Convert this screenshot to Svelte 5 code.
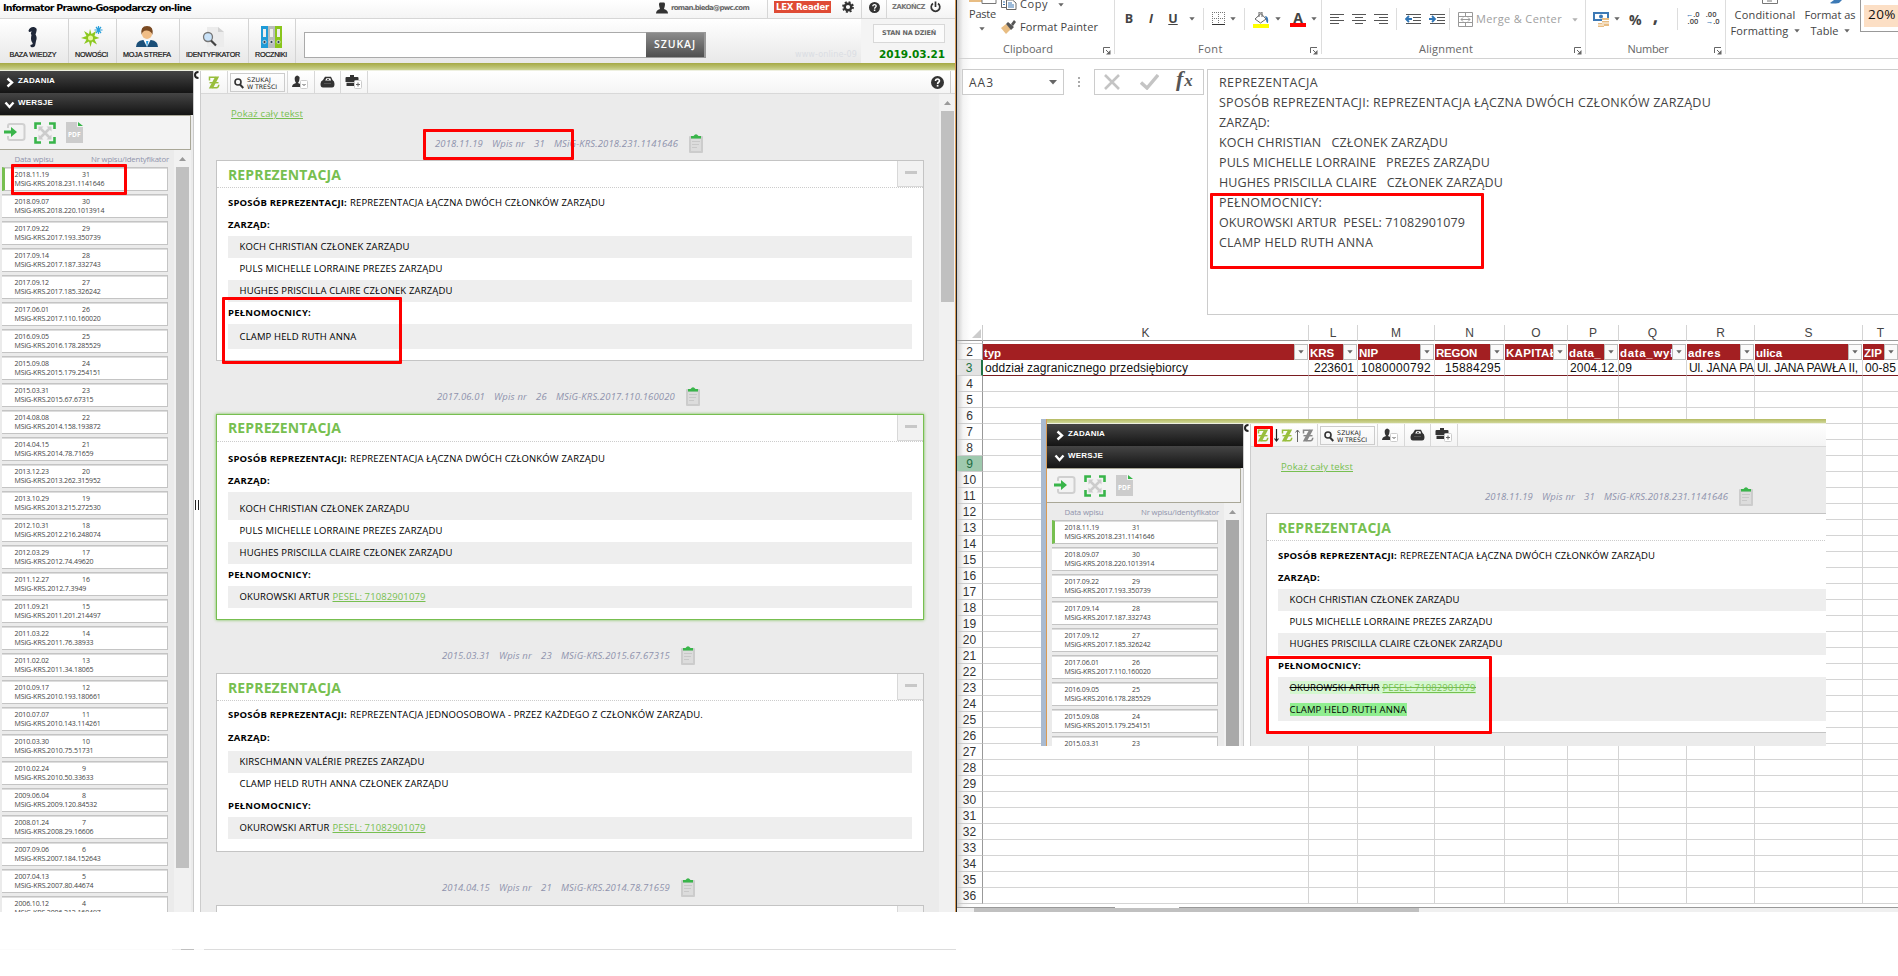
<script>
  // Spreads a label over a known width by adjusting its tracking.
  function fit(node, width) {
    const natural = node.getBoundingClientRect().width;
    const n = node.textContent.length;
    if (width && n) node.style.letterSpacing = (width - natural) / n + 'px';
  }

  const entries = [
    ['2018.11.19', 31, '2018.231.1141646'], ['2018.09.07', 30, '2018.220.1013914'],
    ['2017.09.22', 29, '2017.193.350739'], ['2017.09.14', 28, '2017.187.332743'],
    ['2017.09.12', 27, '2017.185.326242'], ['2017.06.01', 26, '2017.110.160020'],
    ['2016.09.05', 25, '2016.178.285529'], ['2015.09.08', 24, '2015.179.254151'],
    ['2015.03.31', 23, '2015.67.67315'], ['2014.08.08', 22, '2014.158.193872'],
    ['2014.04.15', 21, '2014.78.71659'], ['2013.12.23', 20, '2013.262.315952'],
    ['2013.10.29', 19, '2013.215.272530'], ['2012.10.31', 18, '2012.216.248074'],
    ['2012.03.29', 17, '2012.74.49620'], ['2011.12.27', 16, '2012.7.3949'],
    ['2011.09.21', 15, '2011.201.214497'], ['2011.03.22', 14, '2011.76.38933'],
    ['2011.02.02', 13, '2011.34.18065'], ['2010.09.17', 12, '2010.193.180661'],
    ['2010.07.07', 11, '2010.143.114261'], ['2010.03.30', 10, '2010.75.51731'],
    ['2010.02.24', 9, '2010.50.33633'], ['2009.06.04', 8, '2009.120.84532'],
    ['2008.01.24', 7, '2008.29.16606'], ['2007.09.06', 6, '2007.184.152643'],
    ['2007.04.13', 5, '2007.80.44674'], ['2006.10.12', 4, '2006.212.160497']
  ];

  const joint = ['REPREZENTACJA ŁĄCZNA DWÓCH CZŁONKÓW ZARZĄDU', 255];
  const board = [
    ['KOCH CHRISTIAN CZŁONEK ZARZĄDU', 170],
    ['PULS MICHELLE LORRAINE PREZES ZARZĄDU', 203],
    ['HUGHES PRISCILLA CLAIRE CZŁONEK ZARZĄDU', 213]
  ];
  const clamp = { name: 'CLAMP HELD RUTH ANNA', w: 117 };
  const okur = { name: 'OKUROWSKI ARTUR', w: 90, pesel: 'PESEL: 71082901079' };

  const records = [
    { date: '2018.11.19', nr: 31, id: 'MSiG-KRS.2018.231.1141646', way: joint, people: board, proxies: [clamp], kind: 'first' },
    { date: '2017.06.01', nr: 26, id: 'MSiG-KRS.2017.110.160020', way: joint, people: board, proxies: [okur], kind: 'active' },
    { date: '2015.03.31', nr: 23, id: 'MSiG-KRS.2015.67.67315',
      way: ['REPREZENTACJA JEDNOOSOBOWA - PRZEZ KAŻDEGO Z CZŁONKÓW ZARZĄDU.', 353],
      people: [['KIRSCHMANN VALÉRIE PREZES ZARZĄDU', 185], ['CLAMP HELD RUTH ANNA CZŁONEK ZARZĄDU', 209]], proxies: [okur], kind: 'third' },
    { date: '2014.04.15', nr: 21, id: 'MSiG-KRS.2014.78.71659', kind: 'fourth' }
  ];
  const compared = [{ ...records[0], proxies: [{ ...okur, state: 'removed' }, { ...clamp, state: 'added' }], kind: 'diff' }];

  const columns = [['K', 326], ['L', 49], ['M', 77], ['N', 70], ['O', 63], ['P', 51], ['Q', 68], ['R', 68], ['S', 108], ['T', 36]];
  const heads = [['typ', 17], ['KRS', 24], ['NIP', 19], ['REGON', 41], ['KAPITAŁ', 51], ['data_', 32], ['data_wył', 54], ['adres', 33], ['ulica', 26], ['ZIP', 18]];
  const values = [['oddział zagranicznego przedsiębiorcy', 203], ['223601', 40, 1], ['1080000792', 70, 1], ['15884295', 56, 1], null, ['2004.12.09', 62], null, ['Ul. JANA PA', 65], ['Ul. JANA PAWŁA II,', 101], ['00-85', 31]];
  const blankRows = Array.from({ length: 33 }, (_, i) => i + 4);

  const formula = [
    ['REPREZENTACJA', 99], ['SPOSÓB REPREZENTACJI: REPREZENTACJA ŁĄCZNA DWÓCH CZŁONKÓW ZARZĄDU', 492],
    ['ZARZĄD:', 51], ['KOCH CHRISTIAN   CZŁONEK ZARZĄDU', 229], ['PULS MICHELLE LORRAINE   PREZES ZARZĄDU', 271],
    ['HUGHES PRISCILLA CLAIRE   CZŁONEK ZARZĄDU', 284], ['PEŁNOMOCNICY:', 103],
    ['OKUROWSKI ARTUR  PESEL: 71082901079', 246], ['CLAMP HELD RUTH ANNA', 154]
  ];
</script>

{#snippet tri()}<svg class="tri" width="6" height="4" viewBox="0 0 6 4"><path d="M.3.3h5.400L3 3.600z" fill="#666" /></svg>{/snippet}
{#snippet help(s)}
  <svg width={s} height={s} viewBox="0 0 12 12"><circle cx="6" cy="6" r="6" fill="#333" /><path d="M4.200 4.600c0-2.500 3.800-2.300 3.600 0-.1 1.200-1.700 1.200-1.700 2.700" fill="none" stroke="#fff" stroke-width="1.500" /><rect x="5.300" y="8.200" width="1.600" height="1.600" fill="#fff" /></svg>
{/snippet}
{#snippet zed(color)}
  <svg width="12" height="13" viewBox="0 0 12 13"><path d="M1.500 4.500V1.200h6M4.500 11.800h4q2 0 2.300-3" fill="none" stroke={color} stroke-width="1.500" /><path d="M7.300.6h3.900L4.800 12.500H.8z" fill={color} /><path d="M1.500 6.700h9" stroke={color} stroke-width="1.400" /></svg>
{/snippet}
{#snippet launcher()}
  <svg class="launch" width="8" height="8" viewBox="0 0 8 8"><path d="M.5 6V.5H7M3 3l3 3" fill="none" stroke="#666" /><path d="M7.500 3v4.500H3z" fill="#666" /></svg>
{/snippet}

{#snippet sidebar()}
  <aside class="side">
    <div class="acc"><svg width="8" height="11" viewBox="0 0 8 11"><path d="m1.500 1.500 4.500 4-4.500 4" fill="none" stroke="#fff" stroke-width="2.400" /></svg><span use:fit={37}>ZADANIA</span></div>
    <div class="acc open"><svg width="11" height="8" viewBox="0 0 11 8"><path d="m1.500 1.500 4 4.500 4-4.500" fill="none" stroke="#fff" stroke-width="2.400" /></svg><span use:fit={35}>WERSJE</span></div>
    <div class="tools">
      <svg width="22" height="20" viewBox="0 0 22 20"><path d="M4 6V4q0-2 2-2h12q2.500 0 2.500 2v12q0 2-2.500 2H6q-2 0-2-2v-2" fill="none" stroke="#d0d0d0" stroke-width="2" /><path d="M0 8.500h7V5l6 5-6 5v-3.500H0z" fill="#39b54a" /></svg>
      <svg width="22" height="22" viewBox="0 0 22 22"><path d="M1.500 7V1.500H7M15 1.500h5.500V7M20.500 15v5.500H15M7 20.500H1.500V15" fill="none" stroke="#39b54a" stroke-width="2.600" /><path d="M6 6l10 10M16 6 6 16" stroke="#ccc" stroke-width="2.500" /><path d="M4.500 4.500h5l-5 5zM17.500 4.500h-5l5 5zM4.500 17.500h5l-5-5zM17.500 17.500h-5l5-5z" fill="#ccc" /></svg>
      <span class="pdf"><svg width="17" height="21" viewBox="0 0 17 21"><path d="M0 0h11v5h6v16H0z" fill="#ccc" /><path d="M12 0v4h5z" fill="#39b54a" /></svg><b>PDF</b></span>
    </div>
    <div class="listwrap">
      <div class="list">
        <div class="listhead"><span use:fit={39}>Data wpisu</span><span use:fit={78}>Nr wpisu/Identyfikator</span></div>
        {#each entries as [date, nr, id], i}
          <div class="entry" class:current={i === 0}>
            <div><span use:fit={34.5}>{date}</span><span class="nr">{nr}</span></div>
            <div><span use:fit={(id.length + 9) * 3.59}>MSiG-KRS.{id}</span></div>
          </div>
        {/each}
      </div>
      <div class="sbar"><svg width="7" height="4" viewBox="0 0 7 4"><path d="M0 4 3.500 0 7 4z" fill="#999" /></svg><i></i></div>
    </div>
  </aside>
  <div class="splitter"><svg width="5" height="8" viewBox="0 0 5 8"><path d="M4.500 1Q1 1 1 4t3.500 3" fill="none" stroke="#222" stroke-width="2" /></svg><i></i></div>
{/snippet}

{#snippet toolbar(diff)}
  <div class="toolbar">
    <div class="tc z" class:wide={diff}>
      {@render zed('#98be3c')}
      {#if diff}
        <svg class="first-arrow" width="5" height="13" viewBox="0 0 5 13"><path d="M2.500 0v12M.5 9.500l2 2.500 2-2.500" fill="none" stroke="#222" stroke-width="1.200" /></svg>{@render zed('#98be3c')}
        <svg width="5" height="13" viewBox="0 0 5 13"><path d="M2.500 13V1M.5 3.500l2-2.500 2 2.500" fill="none" stroke="#666" /></svg>{@render zed('#888')}
      {/if}
    </div>
    <div class="tc find"><div class="findbtn"><svg width="10" height="11" viewBox="0 0 10 11"><circle cx="4" cy="4" r="3" fill="none" stroke="#333" stroke-width="1.600" /><path d="m6 6.500 3.300 3.500" stroke="#333" stroke-width="2" /></svg><div><span use:fit={24}>SZUKAJ</span><br /><span use:fit={30}>W TREŚCI</span></div></div></div>
    <div class="tc"><svg width="17" height="14" viewBox="0 0 17 14"><path d="M0 12q0-3 4-4Q2 5 3 2q2-3 4.500 0Q8 5.500 6 8q4 1 4 4z" fill="#333" /><rect x="8.500" y="5.500" width="7" height="8" rx="1" fill="#fff" stroke="#ccc" /><path d="m10.500 9 1.500 1.500L13.500 9" fill="none" stroke="#555" /></svg></div>
    <div class="tc"><svg width="15" height="12" viewBox="0 0 15 12"><path d="M3 4 5 .8h6L12.500 4q2 1 2 4 0 3.500-2.500 3.500H3Q.5 11.500.5 8q0-3 2.500-4z" fill="#333" /><path d="M5.200 4.500 6.300 2.200h4l.8 2.300z" fill="#fff" /><path d="M7 3.500h2M4 7.500h7" stroke="#555" /></svg></div>
    <div class="tc"><svg width="18" height="14" viewBox="0 0 18 14"><path d="M5 2V0h4v2h3.500q1 0 1 1v4H.5V3q0-1 1-1zM1.500 7.800H9V11H1.500z" fill="#333" /><rect x="9.500" y="5.500" width="7" height="8" rx="1" fill="#fff" stroke="#ccc" /><path d="M13 7.500v4M11 9.500h4" stroke="#666" /></svg></div>
    <div class="grow"></div>
    {#if !diff}<div class="endhelp">{@render help(13)}</div>{/if}
  </div>
{/snippet}

{#snippet record(r)}
  <div class="meta {r.kind}"><span use:fit={48}>{r.date}</span><span use:fit={33}>Wpis nr</span><span use:fit={11}>{r.nr}</span><span use:fit={r.id.length * 4.96}>{r.id}</span>
    <svg width="14" height="19" viewBox="0 0 14 19"><rect y="2" width="14" height="17" rx="1" fill="#ccc" /><rect x="2" y="5" width="10" height="12" fill="#dcdcdc" /><path d="M3 7.500h8M3 10.500h7M3 13.500h5" stroke="#c8c8c8" /><path d="M2 4.500V2h2.500Q7-1.500 9.500 2H12v2.500z" fill="#39b54a" /></svg>
  </div>
  <section class="card {r.kind}">
    <header>{#if r.way}<h2 use:fit={113}>REPREZENTACJA</h2>{:else}<span></span>{/if}<button><i></i></button></header>
    {#if r.way}
      <div class="body">
        <p><b use:fit={119}>SPOSÓB REPREZENTACJI:</b><span class="way" use:fit={r.way[1]}>{r.way[0]}</span></p>
        <p><b use:fit={42}>ZARZĄD:</b></p>
        <ul>{#each r.people as [name, w]}<li><span use:fit={w}>{name}</span></li>{/each}</ul>
        <p><b use:fit={83}>PEŁNOMOCNICY:</b></p>
        <ul class="proxies">{#each r.proxies as p}<li><span class="name {p.state ?? ''}"><span use:fit={p.w}>{p.name}</span>{#if p.pesel}<span class="gap"> </span><u use:fit={93}>{p.pesel}</u>{/if}</span></li>{/each}</ul>
      </div>
    {/if}
  </section>
{/snippet}

<div class="screen">
  <div class="app">
    <header class="top">
      <div class="line1">
        <div class="title"><b use:fit={188}>Informator Prawno-Gospodarczy on-line</b></div>
        <div class="user"><svg width="12" height="12" viewBox="0 0 12 12"><path d="M0 11.500Q0 8 4 7 2 1 4 .5h4Q10 1 8 7q4 1 4 4.500z" fill="#333" /></svg><b use:fit={78}>roman.bieda@pwc.com</b></div>
        <div class="lex"><b><span use:fit={53}>LEX Reader</span></b><svg width="12" height="12" viewBox="0 0 12 12"><circle cx="6" cy="6" r="3.300" fill="none" stroke="#333" stroke-width="2.400" /><circle cx="6" cy="6" r="5" fill="none" stroke="#333" stroke-width="1.800" stroke-dasharray="2 1.930" /></svg></div>
        <div class="hq">{@render help(11)}</div>
        <div class="exit"><b use:fit={33}>ZAKOŃCZ</b><svg width="11" height="12" viewBox="0 0 11 12"><path d="M3 2.500a4.300 4.300 0 1 0 5 0M5.500.5v5.500" fill="none" stroke="#333" stroke-width="1.700" /></svg></div>
      </div>
      <div class="line2">
        <div class="nav" style:width="69px"><svg width="14" height="22" viewBox="0 0 14 22"><path d="M2.500 4.500Q4 .5 8 1q3.500 1 2.500 4-.5 2-1 3.500 2 3 .5 6.500-.5 3-1 5-1.500 2-4 1-1.500-1.500 0-2.500 1.500.5 1.800-1-1.800-2-1.800-4.500 0-2.500.5-4Q4 7 6 5.500L3 6z" fill="#1f2738" /></svg><span use:fit={47}>BAZA WIEDZY</span></div>
        <div class="nav" style:width="48px"><svg width="22" height="22" viewBox="0 0 22 22"><path d="m9 3 1.500 5L15 5l-1.500 5 5 2-5 1.500 2.500 5-5-3L9.500 21 8 15.500 3 18l2.500-4.500L0 12l5.500-2L3 5l5 3z" fill="#8cc820" /><circle cx="9.500" cy="12" r="2.500" fill="#e9f7a0" /><path d="M17.500 0v8M13.500 4h8M15 1l5 6M20 1l-5 6" stroke="#2aa0dc" stroke-width="1.200" /></svg><span use:fit={33}>NOWOŚCI</span></div>
        <div class="nav" style:width="63px"><svg width="22" height="22" viewBox="0 0 22 22"><path d="M0 21q0-6 7-7h8q7 1 7 7z" fill="#1b4f78" /><path d="m7.500 14 3.500 7 3.500-7z" fill="#fff" /><path d="m10 15 1 6 1.500-6z" fill="#2a9de0" /><circle cx="11" cy="8" r="5" fill="#f0bd86" /><path d="M5.500 9Q4 0 11 0t5.500 9q-1-4-5.500-4.500T5.500 9z" fill="#7a4a22" /></svg><span use:fit={48}>MOJA STREFA</span></div>
        <div class="nav" style:width="69px"><svg width="22" height="22" viewBox="0 0 22 22"><path d="M5 1h11l6 5v15H5z" fill="#ececec" /><path d="m16 1 6 5h-6z" fill="#d2d2d2" /><circle cx="6" cy="11" r="4.500" fill="#c9e2f8" stroke="#777" stroke-width="1.300" /><path d="m9 14.500 5 5" stroke="#444" stroke-width="2.200" /></svg><span use:fit={54}>IDENTYFIKATOR</span></div>
        <div class="nav" style:width="47px"><svg width="21" height="22" viewBox="0 0 21 22"><rect width="7" height="22" fill="#1f9bd7" /><rect x="7" width="7" height="22" fill="#b9bcbd" /><rect x="14" width="7" height="22" fill="#89c51c" /><path d="M2 3h3v8H2zM9 3h3v8H9zM16 3h3v8h-3z" fill="#eee" /><g fill="#345" stroke="#fff" stroke-width=".7"><circle cx="3.500" cy="16" r="1.600" /><circle cx="10.500" cy="16" r="1.600" /><circle cx="17.500" cy="16" r="1.600" /></g></svg><span use:fit={32}>ROCZNIKI</span></div>
        <div class="search"></div><div class="go"><span use:fit={42}>SZUKAJ</span></div>
        <div class="host"><span use:fit={62}>www-online-09</span></div>
        <div class="state"><div><b use:fit={54}>STAN NA DZIEŃ</b></div><b class="day"><span use:fit={66}>2019.03.21</span></b></div>
      </div>
    </header>
    <div class="band"></div>
    <div class="cols">
      {@render sidebar()}
      <main>
        {@render toolbar(false)}
        <div class="scroll">
          <div class="content">
            <a href="#all" use:fit={72}>Pokaż cały tekst</a>
            {#each records as r}{@render record(r)}{/each}
          </div>
          <div class="sbar big"><svg width="7" height="4" viewBox="0 0 7 4"><path d="M0 4 3.500 0 7 4z" fill="#999" /></svg><i></i></div>
        </div>
      </main>
    </div>
    <div class="mark" style="left:423px;top:129px;width:151px;height:31px"></div>
    <div class="mark" style="left:11px;top:164px;width:116px;height:31px"></div>
    <div class="mark" style="left:222px;top:297px;width:180px;height:67px"></div>
  </div>
  <div class="edge"></div>

  <div class="excel">
    <div class="ribbon">
      <div class="grp" style:width="158px">
        <div class="paste"><svg width="28" height="4" viewBox="0 0 28 4"><path d="M0 0h17v2H0z" fill="#e8bd83" /><path d="M13 0v3.500h14V0" fill="#fff" stroke="#777" /></svg><span use:fit={27}>Paste</span>{@render tri()}</div>
        <div class="clip">
          <div><svg width="16" height="10" viewBox="0 0 16 10"><path d="M.5 0v7.500H5M5.500 0h6l3.500 3v6.500H5.500z" fill="#fff" stroke="#666" /><path d="M2 2h2M2 4.500h2M7 3h4M7 5h6M7 7h6" stroke="#3c79b5" /></svg><span use:fit={28}>Copy</span>{@render tri()}</div>
          <div><svg width="16" height="14" viewBox="0 0 16 14"><path d="m0 8 5-4 5 5-5 5z" fill="#e8bd83" /><path d="m5 4 2-2 6 5-3 3zM10 4l3-4 2 2-3 4z" fill="#555" /></svg><span use:fit={78}>Format Painter</span></div>
        </div>
        <div class="lab"><span use:fit={50}>Clipboard</span></div>{@render launcher()}
      </div>
      <div class="grp row" style:width="207px">
        <b class="c" style:width="14px" style:margin-left="7px">B</b><b class="c it" style:width="14px">I</b><b class="c ul" style:width="14px">U</b>{@render tri()}<i class="vs"></i>
        <svg width="13" height="13" viewBox="0 0 13 13"><path d="M.5 0v12M6.500 0v12M12.500 0v12M0 .5h12M0 6.500h12" stroke="#777" stroke-dasharray="1 1" fill="none" /><path d="M0 12.500h13" stroke="#333" /></svg>{@render tri()}<i class="vs"></i>
        <svg width="17" height="16" viewBox="0 0 17 16"><path d="M2 7 8 1.500 13 7 7.500 11z" fill="#fff" stroke="#666" /><path d="M6 5V0h3v5" fill="none" stroke="#666" /><path d="M12 4q4 0 3 7-2 0-2-4z" fill="#3c79b5" /><path d="M0 12h16v4H0z" fill="#ff0" /></svg>{@render tri()}
        <span class="fontcol"><b>A</b><i></i></span>{@render tri()}
        <div class="lab"><span use:fit={25}>Font</span></div>{@render launcher()}
      </div>
      <div class="grp row" style:width="264px" style:padding-left="8px">
        <svg class="al" width="14" height="12" viewBox="0 0 14 12"><path d="M0 .5h14M0 3.500h9M0 6.500h14M0 9.500h9" stroke="#555" /></svg>
        <svg class="al" width="14" height="12" viewBox="0 0 14 12"><path d="M0 .5h14M3 3.500h8M0 6.500h14M3 9.500h8" stroke="#555" /></svg>
        <svg class="al" width="14" height="12" viewBox="0 0 14 12"><path d="M0 .5h14M5 3.500h9M0 6.500h14M5 9.500h9" stroke="#555" /></svg><i class="vs n"></i>
        <svg class="al" width="16" height="12" viewBox="0 0 16 12"><path d="M1 .5h15M8 3.500h8M8 6.500h8M1 9.500h15" stroke="#555" /><path d="M7 5H1M4 2 1 5l3 3" fill="none" stroke="#2f75b5" stroke-width="1.800" /></svg>
        <svg class="al tight" width="16" height="12" viewBox="0 0 16 12"><path d="M1 .5h15M8 3.500h8M8 6.500h8M1 9.500h15" stroke="#555" /><path d="M0 5h6M3 2l3 3-3 3" fill="none" stroke="#2f75b5" stroke-width="1.800" /></svg><i class="vs n"></i>
        <svg width="15" height="15" viewBox="0 0 15 15" fill="none" stroke="#999"><path d="M.5.500h14v14H.5zM.5 4.500h14M.5 10.500h14M7.500 0v4M7.500 11v4M3 7.500h9M5 5.500l-2 2 2 2M10 5.500l2 2-2 2" /></svg><span class="merge" use:fit={86}>Merge &amp; Center</span><span class="pale">{@render tri()}</span>
        <div class="lab"><span use:fit={54}>Alignment</span></div>{@render launcher()}
      </div>
      <div class="grp row" style:width="140px" style:padding-left="7px">
        <svg width="16" height="16" viewBox="0 0 16 16"><path d="M0 0h16v9H0z" fill="#3c79b5" /><path d="M2 2h12v5H2z" fill="#fff" /><circle cx="8" cy="4.500" r="2" fill="#3c79b5" /><path d="M9 6h7v8H9zM5 11h6v4H5z" fill="#e8bd83" /><path d="M9 8.500h7M9 11h7M5 13h6" stroke="#fff" /></svg>{@render tri()}
        <b class="pct">%</b><b class="comma">,</b><i class="vs n"></i>
        <span class="dec"><em>←</em>.0<br />&nbsp;.00</span><span class="dec">.00<br /><em>→</em>.0</span>
        <div class="lab"><span use:fit={41}>Number</span></div>{@render launcher()}
      </div>
      <div class="styles">
        <div class="cf"><svg width="16" height="4" viewBox="0 0 16 4"><path d="M.5 0v3.500h15V0M5 1h5" fill="none" stroke="#777" /></svg><span><span use:fit={61}>Conditional</span></span><span><span use:fit={58}>Formatting</span>{@render tri()}</span></div>
        <div class="cf fa"><svg width="16" height="4" viewBox="0 0 16 4"><path d="M3 3q2 1 9 0l3-3H7z" fill="#3c79b5" /></svg><span><span use:fit={51}>Format as</span></span><span><span use:fit={28}>Table</span>{@render tri()}</span></div>
        <div class="accent"><div><span use:fit={28}>20%</span></div></div>
      </div>
    </div>
    <div class="fbar">
      <div class="namebox"><span use:fit={25}>AA3</span><svg width="8" height="5" viewBox="0 0 8 5"><path d="M0 0h8L4 4.500z" fill="#666" /></svg></div>
      <div class="dots"><i></i><i></i><i></i></div>
      <div class="fbtn"><svg width="17" height="16" viewBox="0 0 17 16"><path d="m1 1 14 14M15 1 1 15" stroke="#c4c4c4" stroke-width="2.600" /></svg><svg width="19" height="16" viewBox="0 0 19 16"><path d="m1 8.500 6 5.500L18 1" fill="none" stroke="#c4c4c4" stroke-width="3.400" /></svg><span class="fx">f<small>x</small></span></div>
      <div class="ftext">{#each formula as [t, w]}<div><span use:fit={w}>{t}</span></div>{/each}</div>
    </div>
    <div class="grid">
      <div class="gr heads"><div class="rn"><svg width="9" height="9" viewBox="0 0 9 9"><path d="M9 0v9H0z" fill="#ccc" /></svg></div>{#each columns as [c, w]}<div class="cell" style:width="{w}px">{c}</div>{/each}</div>
      <div class="gr sliver"><div class="rn"></div></div>
      <div class="gr red"><div class="rn">2</div>{#each heads as [h, w], i}<div class="cell" style:width="{columns[i][1]}px"><div class="hd"><span use:fit={w}>{h}</span></div><i>{@render tri()}</i></div>{/each}</div>
      <div class="gr vals"><div class="rn">3</div>{#each values as v, i}<div class="cell" class:right={v?.[2]} class:clip={i !== 5} style:width="{columns[i][1]}px">{#if v}<span use:fit={v[1]}>{v[0]}</span>{/if}</div>{/each}</div>
      {#each blankRows as n}
        <div class="gr"><div class="rn" class:sel={n === 9}>{n}</div>{#each columns as [c, w]}<div class="cell" style:width="{w}px"></div>{/each}</div>
      {/each}
    </div>
    <div class="tabs"><i style:width="158px"></i><i style:width="64px" class="t"></i><i style:flex="1"></i></div>
    <div class="hs"><i></i></div>
    <div class="mark" style="left:253px;top:193px;width:274px;height:76px"></div>
  </div>

  <div class="paste-shot">
    <div class="shotedge"></div>
    <div class="shot">
      <div class="band"></div>
      <div class="cols">{@render sidebar()}
        <main>{@render toolbar(true)}
          <div class="scroll"><div class="content"><a href="#all" use:fit={72}>Pokaż cały tekst</a>{#each compared as r}{@render record(r)}{/each}</div></div>
        </main>
      </div>
    </div>
    <div class="mark" style="left:213px;top:7px;width:19px;height:21px"></div>
    <div class="mark" style="left:225px;top:237px;width:226px;height:78px"></div>
  </div>
  <div class="nextshot"><i style:width="172px" class="l"></i><i style:width="9px"></i><i class="d" style:width="13px"></i><i class="l" style:width="10px"></i><i class="m" style:width="752px"></i></div>
</div>

<style>
  :global(body) { margin: 0; background: #fff; overflow: hidden; }
  .screen { position: relative; width: 1898px; height: 976px; overflow: hidden; background: #fff; display: grid; grid-template-columns: 955px 2px 941px; grid-template-rows: 912px 64px; font-family: "Open Sans", sans-serif; }
  .screen :global(*) { box-sizing: border-box; }
  svg { display: block; flex: none; }
  span, b, u, h2, a { white-space: pre; }
  .app { position: relative; height: 912px; overflow: hidden; display: flex; flex-direction: column; background: #ebebeb; }
  .edge { border-left: 1px solid #d99b55; background: #222; }
  .mark { position: absolute; border: 3px solid #f00; border-radius: 1px; z-index: 3; }

  .top { height: 63px; background: linear-gradient(#fff, #e9e9e9); font-family: "DejaVu Sans", sans-serif; flex: none; }
  .line1 { height: 19px; display: flex; border-bottom: 1px solid #d6d6d6; background: linear-gradient(#fff, #f4f4f4); padding-left: 3px; line-height: 16px; }
  .title { font: 9.500px/16px "DejaVu Sans", sans-serif; color: #000; width: 653px; }
  .user { width: 112px; display: flex; gap: 3px; padding-top: 2px; border-right: 1px solid #d6d6d6; font-size: 7px; color: #666; line-height: 12px; }
  .lex { width: 94px; display: flex; gap: 11px; padding: 1px 0 0 6px; border-right: 1px solid #d6d6d6; }
  .lex b { width: 57px; height: 12px; padding-left: 2px; background: #df4b35; color: #fff; font-size: 8.500px; line-height: 12px; }
  .hq { width: 25px; padding: 2px 0 0 7px; border-right: 1px solid #d6d6d6; }
  .exit { display: flex; gap: 5px; padding: 1px 0 0 5px; font-size: 6.800px; color: #777; line-height: 13px; }
  .line2 { height: 44px; display: flex; background: linear-gradient(#fff, #e8e8e8); }
  .nav { border-right: 1px solid #d4d4d4; display: flex; flex-direction: column; align-items: center; padding: 7px 2px 0 0; gap: 1px; font: 7.200px/12px "Liberation Sans", sans-serif; color: #111; -webkit-text-stroke: .2px #111; }
  .search { margin: 13px 0 0 8px; width: 342px; height: 26px; background: #fff; border: 1px solid #aaa; border-right: 0; }
  .go { margin-top: 13px; width: 60px; height: 26px; background: linear-gradient(#8b8b8b, #4f4f4f); border: solid #999; border-width: 1px 2px 1px 0; color: #fff; font: 600 10.500px/23px "Open Sans", sans-serif; text-align: center; }
  .host { width: 155px; text-align: right; padding: 29px 4px 0 0; font-size: 8px; color: #dadde3; line-height: 14px; }
  .state { flex: 1; background: #f4f4f4; padding: 5px 10px 0 12px; display: flex; flex-direction: column; }
  .state div { height: 19px; border: 1px solid #d8d8d8; background: #fbfbfb; text-align: center; font-size: 6.500px; line-height: 16px; color: #666; }
  .day { color: #008000; font-size: 10.500px; line-height: 14px; margin-top: 4px; text-align: right; }
  .band { height: 8px; flex: none; background: linear-gradient(#a5a944 0, #bcc272 55%, #cdd494 85%, #eef0e0 86%); }
  .cols { flex: 1; min-height: 0; display: flex; }

  .side { width: 193px; flex: none; display: flex; flex-direction: column; overflow: hidden; background: #ebebeb; }
  .acc { height: 22px; flex: none; display: flex; align-items: flex-start; gap: 4px; padding: 6px 0 0 6px; background: linear-gradient(#454545, #141414); color: #fff; font: bold 8px/9px "Liberation Sans", sans-serif; }
  .acc span { margin-top: -1px; line-height: 9px; }
  .acc.open { padding-left: 4px; gap: 3px; }
  .acc.open svg { margin-top: 2px; }
  .tools { width: 191px; height: 35px; flex: none; display: flex; gap: 8px; padding: 6px 0 0 4px; background: #f3f3f3; border: solid #a9a797; border-width: 1px 1px 1px 0; }
  .pdf { position: relative; margin-left: 2px; }
  .pdf b { position: absolute; left: 2px; top: 8px; font: bold 6.500px/10px "Open Sans", sans-serif; color: #fff; }
  .listwrap { flex: 1; display: flex; min-height: 0; overflow: hidden; }
  .list { width: 174px; padding: 2px 6px 0 2px; display: flex; flex-direction: column; gap: 3px; flex: none; }
  .listhead { height: 12px; flex: none; display: flex; justify-content: space-between; padding-left: 12.500px; margin-right: -1px; font-size: 7.800px; line-height: 14px; color: #9094ab; }
  .entry { height: 24px; flex: none; background: #fff; border: 1px solid #c4c4c4; border-width: 1px 1px 1px 0; box-shadow: inset 0 1px #ddd; padding: 2px 0 0 12.500px; font-size: 7px; line-height: 9px; color: #444; }
  .entry div { height: 9px; }
  .entry.current { border-left: 3px solid #77bf50; padding-left: 9.500px; }
  .nr { margin-left: 33px; }
  .sbar { width: 17px; flex: none; background: #f1f1f1; display: flex; flex-direction: column; align-items: center; padding-top: 7px; }
  .sbar i { width: 13px; height: 701px; margin-top: 6px; background: #c0c0c0; flex: none; }
  .splitter { width: 8px; flex: none; border: solid #ccc; border-width: 0 1px; background: #fff; display: flex; flex-direction: column; }
  .splitter i { width: 4px; height: 10px; margin: 421px 0 0 1px; border: solid #222; border-width: 0 1px; }
  main { flex: 1; min-width: 0; display: flex; flex-direction: column; background: #ebebeb; }
  .toolbar { height: 23px; flex: none; display: flex; background: linear-gradient(#fff, #f4f4f4); border-bottom: 1px solid #d8d8d8; }
  .tc { width: 26.500px; border-right: 1px solid #d8d8d8; display: flex; align-items: center; justify-content: center; }
  .tc.z { width: 27px; }
  .tc.z.wide { width: 67px; gap: 2px; padding-left: 6px; justify-content: flex-start; }
  .first-arrow { margin-left: 3px; }
  .tc.find { width: 60px; }
  .findbtn { width: 55px; height: 19px; border: 1px solid #ccc; display: flex; gap: 3px; padding: 2px 0 0 3px; font: 6.200px/7px "DejaVu Sans", sans-serif; color: #222; }
  .findbtn svg { margin-top: 2px; }
  .endhelp { width: 24px; padding: 5px 0 0 4px; margin-right: 4px; border-right: 1px solid #ccc; flex: none; }
  .grow { flex: 1; }
  .scroll { flex: 1; min-height: 0; display: flex; overflow: hidden; }
  .content { width: 738px; flex: none; padding: 10px 15px 0; display: flex; flex-direction: column; }
  .content a { align-self: flex-start; margin-left: 15px; color: #77bf50; font-size: 9.500px; line-height: 19px; height: 19px; flex: none; }
  .big { width: 16px; margin-left: 0; }
  .big i { height: 191px; }
  .meta { flex: none; height: 19px; display: flex; justify-content: center; align-items: center; font-size: 9.500px; font-style: italic; color: #8f93ad; gap: 9px; padding-right: 3px; }
  .meta svg { margin-left: 2px; }
  .meta.first, .meta.diff { margin: 11px 0 7px; padding-right: 2px; }
  .meta.active { margin: 26px 0 8px; }
  .meta.third { margin: 26px 0 8px; }
  .meta.fourth { margin: 26px 0 8px; }
  .card { flex: none; border: 1px solid #c4c4c4; background: #fff; color: #000; font-size: 9.500px; }
  .card.fourth { height: 40px; }
  .card header { height: 27px; border-bottom: 1px dotted #ccc; display: flex; justify-content: space-between; padding-left: 11px; }
  h2 { margin: 0; font-size: 14px; line-height: 27px; color: #77bf50; }
  .active h2 { line-height: 26px; }
  .card button { width: 26px; height: 26px; border: solid #d8d8d8; border-width: 0 0 1px 1px; background: #f2f2f2; padding: 0; display: flex; align-items: center; justify-content: center; }
  .card button i { width: 12px; height: 3px; background: #c8c8c8; margin-bottom: 2px; }
  .body { padding: 4px 11px 11px; }
  .body p { margin: 0; height: 22px; line-height: 21px; display: flex; }
  .way { margin-left: 3px; }
  ul { list-style: none; margin: 0; padding: 0; }
  li { height: 22px; line-height: 21px; padding-left: 11.500px; }
  li:nth-child(odd) { background: #eee; }
  .first .proxies li { height: 25px; line-height: 26px; }
  .diff .proxies li { background: #eee; }
  .proxies { color: #000; }
  .gap { display: inline-block; width: 3px; }
  u { color: #77bf50; }
  .card.active { border-color: #77bf50; box-shadow: 0 0 3px #77bf50; }
  .active .body { padding-top: 6px; }
  .active .body ul:not(.proxies) li:first-child { height: 28px; line-height: 34px; }
  .third .body { padding-top: 2px; padding-bottom: 12px; }
  .third .body p { height: 24px; line-height: 24px; }
  .third .body p:nth-child(2) { line-height: 21px; }
  .third .body ul + p { height: 22px; line-height: 21px; }
  .name { display: inline-block; line-height: 13px; height: 13px; }
  .name.removed { background: #d5f7d0; text-decoration: line-through; }
  .removed u { text-decoration: underline line-through; }
  .name.added { background: #90ee90; }

  .excel { position: relative; height: 912px; overflow: hidden; display: flex; flex-direction: column; background: linear-gradient(90deg, #ccc 0, #f4f4f4 6px, #fff 14px); color: #444; }
  .ribbon { height: 59px; flex: none; display: flex; border-bottom: 1px solid #d2d2d2; font-size: 11px; line-height: 14px; }
  .grp { position: relative; display: flex; height: 59px; flex: none; }
  .grp::after { content: ""; position: absolute; right: 0; top: 0; height: 54px; border-right: 1px solid #ddd; }
  .lab { position: absolute; left: 0; right: 16px; top: 42px; text-align: center; color: #666; }
  .launch { position: absolute; right: 4px; top: 47px; }
  .paste { width: 44px; display: flex; flex-direction: column; align-items: flex-start; padding-left: 12px; }
  .paste .tri { margin: 6px 0 0 10px; }
  .paste span { margin-top: 3px; }
  .clip > div { display: flex; gap: 3px; align-items: center; }
  .clip > div:first-child { height: 10px; line-height: 8px; }
  .clip > div:first-child span { margin-top: -3px; }
  .clip > div:last-child { height: 14px; margin-top: 10px; }
  .clip .tri { margin-left: 7px; }
  .row { padding-top: 11px; align-items: flex-start; }
  .row > svg { margin-top: 1px; }
  .row > .tri { margin: 6px 5px 0; }
  .row .c { margin-right: 8px; font-size: 12.500px; line-height: 16px; text-align: center; }
  .row .c.ul { margin-right: 4px; text-decoration: underline; }
  .it { font-style: italic; }
  .vs { height: 22px; border-left: 1px solid #ddd; margin: -3px 8px 0 3px; }
  .vs.n { margin: -3px 8px 0 0; }
  .row > .al { margin: 3px 8px 0 0; }
  .row > .al.tight { margin-right: 4px; }
  .fontcol { width: 16px; margin-left: 4px; display: block; text-align: center; }
  .fontcol b { display: block; height: 12px; line-height: 13px; font-size: 14px; }
  .fontcol i { display: block; height: 4px; background: #f00; }
  .row > .launch { position: absolute; margin: 0; right: 4px; top: 47px; }
  .merge { color: #a0a0a0; margin: 1px 0 0 3px; }
  .pale { opacity: .5; padding: 7px 0 0 10px; }
  .pct { font-size: 14px; line-height: 17px; margin-left: 4px; width: 15px; }
  .comma { font-size: 19px; line-height: 8px; width: 15px; text-align: center; margin-right: 14px; margin-left: 5px; }
  .dec { width: 18px; margin-right: 3px; font-size: 7.500px; line-height: 7px; font-weight: 600; }
  .dec em { font-style: normal; color: #2f75b5; }
  .styles { display: flex; flex: 1; padding-left: 6px; overflow: hidden; }
  .cf { width: 66px; display: flex; flex-direction: column; align-items: center; flex: none; }
  .cf > svg { margin-bottom: 3px; margin-left: 10px; }
  .cf > span { display: flex; align-items: center; gap: 5px; height: 16px; }
  .cf.fa { width: 60px; margin-left: 2px; }
  .accent { height: 32px; border: solid #999; border-width: 0 0 1px 1px; padding: 5px 0 0 3px; flex: 1; }
  .accent > div { height: 22px; background: #fcdfc5; padding-left: 4px; color: #111; line-height: 19px; font-size: 13.500px; }
  .fbar { height: 266px; flex: none; display: flex; padding-top: 10px; padding-left: 5px; }
  .namebox { width: 102px; height: 26px; border: 1px solid #ccc; background: #fff; display: flex; justify-content: space-between; align-items: center; padding: 0 6px; font-size: 12px; }
  .dots { width: 30px; display: flex; flex-direction: column; align-items: center; gap: 2px; padding-top: 8px; }
  .dots i { width: 2px; height: 2px; background: #aaa; }
  .fbtn { width: 110px; height: 26px; border: 1px solid #ccc; background: #fff; display: flex; align-items: center; gap: 19px; padding-left: 9px; }
  .fx { font: italic bold 22px/20px "Liberation Serif", serif; color: #555; margin-left: -2px; margin-top: -5px; }
  .fx small { font-size: 17px; margin-left: 1px; }
  .ftext { flex: 1; height: 246px; margin-left: 3px; border: 1px solid #ccc; border-right: 0; padding: 3px 0 0 11px; font-size: 12.500px; line-height: 20px; background: #fff; color: #444; }
  .ftext div { height: 20px; }
  .grid { font: 12px/16px "Liberation Sans", sans-serif; height: 581px; overflow: hidden; flex: none; }
  .gr { display: flex; height: 16px; }
  .rn { width: 26px; flex: none; border-right: 1px solid #999; border-bottom: 1px solid #ccc; text-align: center; overflow: hidden; color: #333; }
  .rn.sel { background: #9fc9ae; color: #1c6b40; }
  .cell { flex: none; border-right: 1px solid #d4d4d4; border-bottom: 1px solid #d4d4d4; height: 16px; white-space: pre; position: relative; }
  .heads .cell { text-align: center; border-bottom: 1px solid #999; height: 16px; line-height: 16px; }
  .heads .rn { border-bottom: 1px solid #999; padding: 4px 0 0 15px; border-right-color: #ccc; }
  .sliver { height: 3px; }
  .red .cell { background: #a31f22; color: #fff; font-size: 11.500px; font-weight: bold; border-color: #fff; border-bottom: 0; overflow: hidden; padding-left: 1px; line-height: 18px; display: flex; }
  .hd { flex: 1; min-width: 0; overflow: hidden; }
  .red .cell i { width: 14px; height: 16px; flex: none; background: #fafafa; border: 1px solid #bbb; padding: 5px 0 0 3px; }
  .vals .cell { border-bottom: 1px solid #7a1c20; color: #111; padding-left: 2px; line-height: 16px; z-index: 1; }
  .vals .cell.clip { overflow: hidden; }
  .vals .cell.right { text-align: right; padding-right: 3px; }
  .vals .rn { background: #e2e2e2; color: #217346; border-right: 2px solid #217346; }
  .tabs { height: 2px; display: flex; }
  .tabs i { border-bottom: 1px solid #999; }
  .tabs .t { border: 0; }
  .hs { height: 4px; background: #f0f0f0; padding-left: 17px; flex: none; }
  .hs i { display: block; height: 4px; width: 445px; background: #c0c0c0; }

  .paste-shot { position: absolute; left: 1041px; top: 419px; width: 785px; height: 327px; overflow: hidden; display: flex; background: #ebebeb; }
  .shotedge { width: 6px; flex: none; background: #a9bad0; border-right: 1px solid #d99b55; }
  .shot { width: 779px; height: 327px; flex: none; display: flex; flex-direction: column; overflow: hidden; }
  .shot .band { height: 5px; background: linear-gradient(#b5bb63, #cdd494 75%, #eef0e0 76%); }
  .shot .side { width: 196px; padding-left: 3px; }
  .shot .acc { margin-left: -3px; padding-left: 9px; }
  .shot .acc.open { padding-left: 7px; }
  .shot .tools { margin-left: -3px; padding-left: 7px; width: 194px; }
  .shot .sbar i { background: #a9a9a9; }
  .nextshot { grid-column: 1 / -1; display: flex; height: 1px; margin-top: 37px; }
  .nextshot i { background: #ebebeb; }
  .nextshot .d { background: #c0c0c0; }
  .nextshot .l { background: #fbfbfb; }
  .nextshot .m { background: #dcdcdc; }
</style>
